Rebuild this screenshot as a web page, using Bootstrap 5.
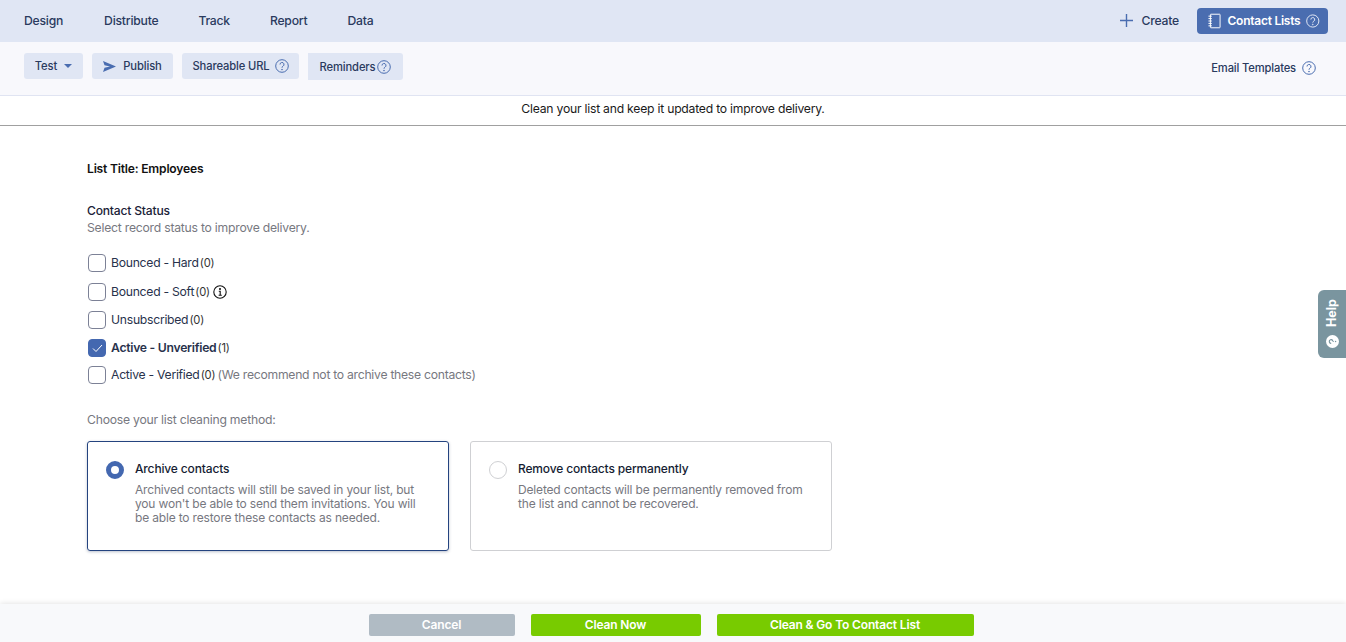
<!DOCTYPE html>
<html lang="en">
<head>
<meta charset="utf-8">
<title>Clean list</title>
<link href="https://cdn.jsdelivr.net/npm/bootstrap@5.3.0/dist/css/bootstrap.min.css" rel="stylesheet">
<style>
html,body{height:642px;overflow:hidden}
body{font-family:Inter,"Liberation Sans",sans-serif;font-size:12.2px;color:#1f2a44;background:#fff;letter-spacing:-.23px}
.topbar{height:42px;background:#e0e6f4;padding:0 18px 0 24px}
.topnav{gap:40px}
.topnav a{font-size:12.2px;font-weight:500;color:#2a3a5e;text-decoration:none}
.topnav a:first-child{margin-right:1px}
.createlink{font-size:12.2px;font-weight:500;color:#2a3a5e;gap:9px;margin-right:18px}
.contactbtn{width:131px;height:26px;background:#4a6db0;color:#fff;font-size:12px;font-weight:600;border-radius:4px;padding:0 8px 0 10px;gap:6px;white-space:nowrap;letter-spacing:-.25px}
.subbar{height:54px;background:#f8f8fc;border-bottom:1px solid #e0e4f2;padding:11px 30px 0 24px}
.subbtn{height:26px;background:#e0e6f4;border-radius:3px;font-size:11.2px;font-weight:500;color:#2a3a5e;gap:5px;justify-content:center;letter-spacing:-.12px}
.wtest{width:59px;gap:7px}.wpub{width:81px;gap:7px}.wurl{width:117px;gap:5px}.wrem{width:95px;height:27px;gap:2px;padding-top:1px;border-radius:0 3px 3px 0}
.subgap{gap:9px}
.emaillink{font-size:11.2px;font-weight:500;color:#2a3a5e;gap:6px;padding-top:7px;letter-spacing:-.15px}
.notice{height:30px;border-bottom:1px solid #a0a0a0;color:#1a1a1a;font-size:12.2px;line-height:26px;text-align:center}
.mainarea{padding:34px 0 0 87px}
.listtitle{font-size:12.1px;font-weight:600;color:#111;line-height:17px;margin-bottom:25px;letter-spacing:-.2px}
.statuslabel{font-size:12.1px;font-weight:500;color:#1a2238;line-height:17px;letter-spacing:-.2px}
.muted{color:#77787f}
.statushint{line-height:17px;margin-bottom:18px}
.checkrow{gap:5px;color:#28324c;height:18px;padding-left:1px;letter-spacing:-.27px}
.checkrow small{font-size:11.2px;color:#333;letter-spacing:-.2px;margin-left:-2px}
.checkrow small+.muted{margin-left:-1px}
.cbox{width:18px;height:18px;border:1px solid #7c8196;border-radius:4px;background:#fff;flex:none}
.cbox.on{background:#4468b0;border-color:#4468b0}
.infoglyph{margin-left:-2px}
.r1{margin-bottom:11px}.r2{margin-bottom:10px}.r3{margin-bottom:10px}.r4{margin-bottom:9px}
.choose{line-height:17px;margin-top:27px;margin-bottom:13px}
.methods{gap:21px}
.methodcard{width:362px;height:110px;border:1px solid #cfd0d3;border-radius:3px;padding:18px 18px 0 18px;gap:11px}
.methodcard.sel{border-color:#24437f;box-shadow:0 1px 3px rgba(30,50,90,.3)}
.radiomark{width:18px;height:18px;border-radius:50%;border:1px solid #cfd0d3;flex:none;margin-top:1px;background:#fff}
.radiomark.on{border:5px solid #4468b0}
.methodtitle{font-size:12px;font-weight:500;color:#151d33;line-height:17px;margin-bottom:6px;letter-spacing:-.15px}
.methodtext{font-size:12px;line-height:14px;color:#77787f;letter-spacing:-.17px;white-space:nowrap}
.footerbar{position:fixed;left:0;right:0;bottom:0;height:38px;background:#f8f9fb;box-shadow:0 -1px 5px rgba(0,0,0,.1);padding:10px 4px 0 0;gap:16px}
.footbtn{height:22px;border-radius:2px;color:#fff;font-size:12px;font-weight:600;line-height:22px;text-align:center;letter-spacing:-.14px}
.fgrey{background:#b0bbc4;width:146px}.fg1{background:#78cb00;width:170px}.fg2{background:#78cb00;width:257px}
.helptab{position:fixed;right:0;top:290px;width:28px;height:68px;background:#7a959f;border-radius:6px 0 0 6px;color:#fff;font-size:12.5px;font-weight:700;gap:8px;padding-top:9px;letter-spacing:0}
.helptext{writing-mode:vertical-rl;transform:rotate(180deg);line-height:1}
</style>
</head>
<body>
<header class="topbar d-flex align-items-center justify-content-between">
  <nav class="topnav d-flex align-items-center">
    <a href="#">Design</a><a href="#">Distribute</a><a href="#">Track</a><a href="#">Report</a><a href="#">Data</a>
  </nav>
  <div class="d-flex align-items-center">
    <span class="createlink d-flex align-items-center">
      <svg width="13" height="13" viewBox="0 0 13 13"><path d="M6.500 0v13M0 6.500h13" stroke="#4a6db0" stroke-width="1.400" fill="none"/></svg>Create
    </span>
    <span class="contactbtn d-flex align-items-center">
      <svg width="15" height="16" viewBox="0 0 15 16" fill="none" stroke="#fff" stroke-width="1"><rect x="3.500" y="1" width="10" height="14" rx=".5"/><path d="M1.500 3h3.500M1.500 5.500h3.500M1.500 8h3.500M1.500 10.500h3.500M1.500 13h3.500" stroke-width="1"/></svg>
      <span>Contact Lists</span>
      <svg width="14" height="14" viewBox="0 0 14 14" fill="none" stroke="#e4e9f6" stroke-width="1"><circle cx="7" cy="7" r="6.300"/><path d="M5 5.500a2 2 0 1 1 3 1.700c-.7.400-1 .8-1 1.500"/><circle cx="7" cy="10.600" r=".4"/></svg>
    </span>
  </div>
</header>
<section class="subbar d-flex justify-content-between align-items-start">
  <div class="d-flex subgap align-items-start">
    <span class="subbtn wtest d-flex align-items-center">Test<svg width="8" height="4" viewBox="0 0 8 4"><path d="M0 0h8L4 4z" fill="#4a6db0"/></svg></span>
    <span class="subbtn wpub d-flex align-items-center"><svg width="13" height="11" viewBox="0 0 13 11"><path d="M0 0l13 5.500L0 11l1.500-4.200L7 5.500 1.500 4.200z" fill="#4a6db0"/></svg>Publish</span>
    <span class="subbtn wurl d-flex align-items-center">Shareable URL<svg width="14" height="14" viewBox="0 0 14 14" fill="none" stroke="#4a6db0" stroke-width="1"><circle cx="7" cy="7" r="6.300"/><path d="M5 5.500a2 2 0 1 1 3 1.700c-.7.400-1 .8-1 1.500"/><circle cx="7" cy="10.600" r=".4"/></svg></span>
    <span class="subbtn wrem d-flex align-items-center">Reminders<svg width="14" height="14" viewBox="0 0 14 14" fill="none" stroke="#4a6db0" stroke-width="1"><circle cx="7" cy="7" r="6.300"/><path d="M5 5.500a2 2 0 1 1 3 1.700c-.7.400-1 .8-1 1.500"/><circle cx="7" cy="10.600" r=".4"/></svg></span>
  </div>
  <span class="emaillink d-flex align-items-center">Email Templates<svg width="14" height="14" viewBox="0 0 14 14" fill="none" stroke="#4a6db0" stroke-width="1"><circle cx="7" cy="7" r="6.300"/><path d="M5 5.500a2 2 0 1 1 3 1.700c-.7.400-1 .8-1 1.500"/><circle cx="7" cy="10.600" r=".4"/></svg></span>
</section>
<div class="notice">Clean your list and keep it updated to improve delivery.</div>
<main class="mainarea">
  <div class="listtitle">List Title: Employees</div>
  <div class="statuslabel">Contact Status</div>
  <div class="statushint muted">Select record status to improve delivery.</div>
  <div class="checkrow r1 d-flex align-items-center"><span class="cbox"></span><span>Bounced - Hard <small>(0)</small></span></div>
  <div class="checkrow r2 d-flex align-items-center"><span class="cbox"></span><span>Bounced - Soft <small>(0)</small></span>
    <svg class="infoglyph" width="14" height="14" viewBox="0 0 14 14" fill="none" stroke="#111" stroke-width="1.100"><circle cx="7" cy="7" r="6.200"/><path d="M5.800 6.300H7.200V10M5.600 10.200h3.200"/><circle cx="7" cy="4" r=".5"/></svg></div>
  <div class="checkrow r3 d-flex align-items-center"><span class="cbox"></span><span>Unsubscribed <small>(0)</small></span></div>
  <div class="checkrow r4 d-flex align-items-center"><span class="cbox on d-flex align-items-center justify-content-center"><svg width="11" height="9" viewBox="0 0 11 9"><path d="M1 4.500l3 3 6-6.500" stroke="#fff" stroke-width="1" fill="none"/></svg></span><span><b class="fw-semibold">Active - Unverified</b> <small>(1)</small></span></div>
  <div class="checkrow d-flex align-items-center"><span class="cbox"></span><span>Active - Verified <small>(0)</small> <span class="muted">(We recommend not to archive these contacts)</span></span></div>
  <div class="choose muted">Choose your list cleaning method:</div>
  <div class="methods d-flex">
    <div class="methodcard sel d-flex">
      <span class="radiomark on"></span>
      <div>
        <div class="methodtitle">Archive contacts</div>
        <div class="methodtext">Archived contacts will still be saved in your list, but<br>you won't be able to send them invitations. You will<br>be able to restore these contacts as needed.</div>
      </div>
    </div>
    <div class="methodcard d-flex">
      <span class="radiomark"></span>
      <div>
        <div class="methodtitle">Remove contacts permanently</div>
        <div class="methodtext">Deleted contacts will be permanently removed from<br>the list and cannot be recovered.</div>
      </div>
    </div>
  </div>
</main>
<aside class="helptab d-flex flex-column align-items-center">
  <span class="helptext">Help</span>
  <svg width="13" height="13" viewBox="0 0 13 13"><circle cx="6.500" cy="6.500" r="6.500" fill="#fff"/><g transform="rotate(-90 6.500 6.500)"><path d="M4.700 5.200a1.800 1.800 0 1 1 2.600 1.500c-.5.300-.8.600-.8 1.100" stroke="#7a959f" stroke-width="1.200" fill="none"/><circle cx="6.500" cy="9.600" r=".7" fill="#7a959f"/></g></svg>
</aside>
<footer class="footerbar d-flex justify-content-center">
  <div class="footbtn fgrey">Cancel</div>
  <div class="footbtn fg1">Clean Now</div>
  <div class="footbtn fg2">Clean &amp; Go To Contact List</div>
</footer>
<script src="https://cdn.jsdelivr.net/npm/bootstrap@5.3.0/dist/js/bootstrap.bundle.min.js"></script>
</body>
</html>
